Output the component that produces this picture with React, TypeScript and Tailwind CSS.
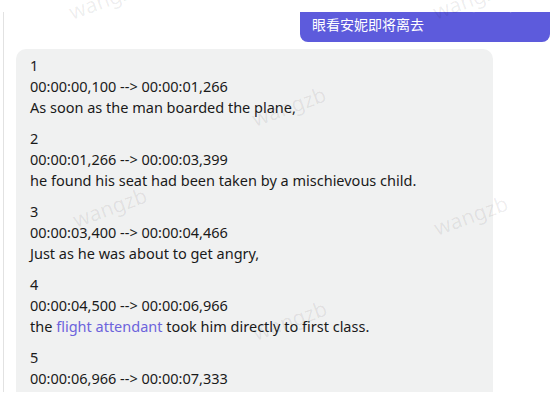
import React from 'react';

type Cue = {
  index: number;
  time: string;
  text: React.ReactNode;
};

const cues: Cue[] = [
  { index: 1, time: '00:00:00,100 --> 00:00:01,266', text: 'As soon as the man boarded the plane,' },
  { index: 2, time: '00:00:01,266 --> 00:00:03,399', text: 'he found his seat had been taken by a mischievous child.' },
  { index: 3, time: '00:00:03,400 --> 00:00:04,466', text: 'Just as he was about to get angry,' },
  {
    index: 4,
    time: '00:00:04,500 --> 00:00:06,966',
    text: (
      <>
        the <span className="text-[#6c63dc]">flight attendant</span> took him directly to first class.
      </>
    ),
  },
  { index: 5, time: '00:00:06,966 --> 00:00:07,333', text: 'and the little child was left behind.' },
];

// watermark spots, centre points
const Watermarks = () => (
  <div className="pointer-events-none absolute inset-0 select-none text-[21px] text-black/[0.07]">
    <span className="absolute left-[106px] top-[0px] -translate-x-1/2 -translate-y-1/2 -rotate-[20deg]">wangzb</span>
    <span className="absolute left-[470px] top-[0px] -translate-x-1/2 -translate-y-1/2 -rotate-[20deg]">wangzb</span>
    <span className="absolute left-[289px] top-[107px] -translate-x-1/2 -translate-y-1/2 -rotate-[20deg]">wangzb</span>
    <span className="absolute left-[110px] top-[208px] -translate-x-1/2 -translate-y-1/2 -rotate-[20deg]">wangzb</span>
    <span className="absolute left-[471px] top-[216px] -translate-x-1/2 -translate-y-1/2 -rotate-[20deg]">wangzb</span>
    <span className="absolute left-[290px] top-[321px] -translate-x-1/2 -translate-y-1/2 -rotate-[20deg]">wangzb</span>
  </div>
);

export default function App() {
  return (
    <div className="relative h-[408px] w-[560px] overflow-hidden bg-white font-['Noto_Sans','Noto_Sans_CJK_SC',sans-serif]">
      <div className="h-[392px] pl-[3px] pt-[12px]">
        <div className="h-full overflow-hidden border-l border-[#e2e2e2]">
          <div className="-mt-[45px] pr-[10px]">
            {/* user message */}
            <div className="flex justify-end">
              <div className="w-[250px] rounded-[8px] bg-[#5d5bdc] px-[12px] pb-[7px] pt-[8px] text-[14px] leading-[20px] text-white">
                <p>安妮在候机厅里看着窗外的飞机，</p>
                <p>手里的登机牌已经被攥得皱巴巴，</p>
                <p>眼看安妮即将离去</p>
              </div>
            </div>

            {/* reply */}
            <div className="ml-[12px] mt-[7px] w-[477px] rounded-[10px] bg-[#f0f1f1] px-[14px] pb-[12px] pt-[6px] text-[14.5px] leading-[21px] text-[#1a1a1a]">
              {cues.map((cue) => (
                <div key={cue.index} className="mb-[10px]">
                  <p>{cue.index}</p>
                  <p>{cue.time}</p>
                  <p>{cue.text}</p>
                </div>
              ))}
            </div>
          </div>
        </div>
      </div>
      <Watermarks />
    </div>
  );
}
